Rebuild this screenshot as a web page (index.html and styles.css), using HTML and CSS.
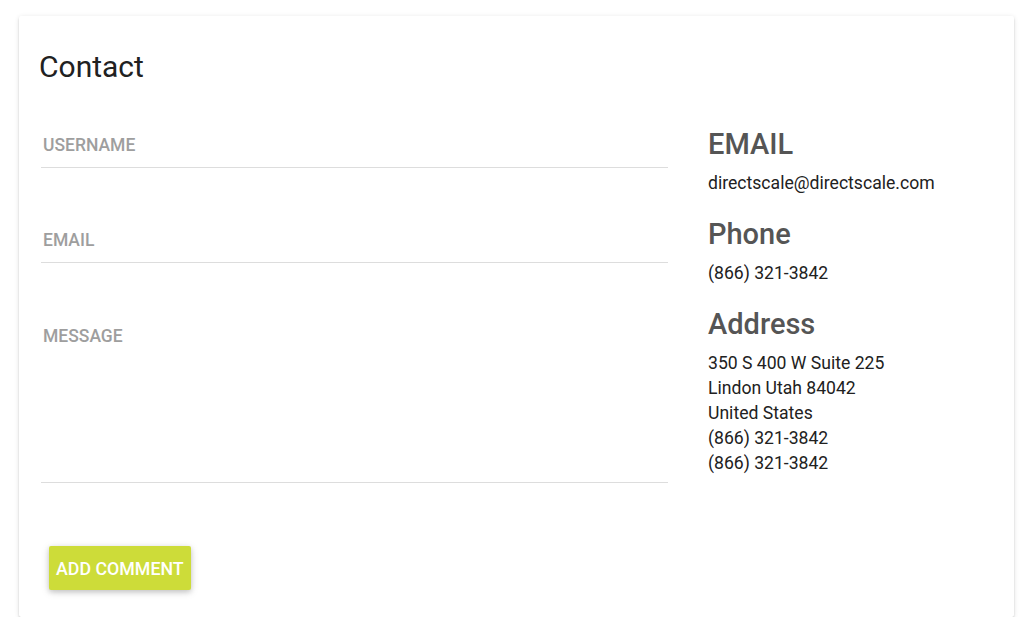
FILE: index.html
```html
<!DOCTYPE html>
<html>
<head>
  <title>Contact</title>
  <link rel="stylesheet" href="styles.css">
</head>
<body>
  <div class="card">
    <h1 class="title">Contact</h1>

    <div class="content">
      <!-- Comment form -->
      <form class="form">
        <input class="field" type="text" placeholder="USERNAME">
        <input class="field" type="email" placeholder="EMAIL">
        <textarea class="field message" placeholder="MESSAGE"></textarea>
      </form>

      <!-- Contact details -->
      <div class="info">
        <h2>EMAIL</h2>
        <p>directscale@directscale.com</p>
        <h2>Phone</h2>
        <p>(866) 321-3842</p>
        <h2>Address</h2>
        <p>350 S 400 W Suite 225<br>Lindon Utah 84042<br>United States<br>(866) 321-3842<br>(866) 321-3842</p>
      </div>
    </div>

    <button class="btn" type="button">ADD COMMENT</button>
  </div>
</body>
</html>
```

FILE: styles.css
```css
body {
  margin: 0;
  padding: 16px 21px 0 19px;
  background-color: #ffffff;
  font-family: Roboto, "Liberation Sans", sans-serif;
}
.card {
  height: 601px;
  box-sizing: border-box;
  padding: 33px 20px 0 20px;
  background-color: #ffffff;
  border-radius: 2px;
  box-shadow: 0 2px 2px 0 rgba(0, 0, 0, 0.14), 0 1px 5px 0 rgba(0, 0, 0, 0.12), 0 3px 1px -2px rgba(0, 0, 0, 0.2);
}
.title {
  margin: 0;
  font-size: 30px;
  font-weight: 400;
  line-height: 36px;
  color: #212121;
}
.content {
  display: flex;
  align-items: flex-start;
  gap: 40px;
  margin-top: 43px;
}
.form {
  display: flex;
  flex-direction: column;
  width: 627px;
  margin-left: 2px;
}
.field {
  height: 40px;
  box-sizing: border-box;
  margin: 0 0 55px 0;
  padding: 0 2px 5px 2px;
  border: none;
  border-bottom: 1px solid #dddddd;
  font-family: inherit;
  font-size: 17.5px;
  font-weight: 500;
  outline: none;
  resize: none;
}
.field::placeholder {
  color: #9e9e9e;
}
.message {
  height: 165px;
  padding-top: 8px;
  margin-bottom: 0;
}
.info h2 {
  margin: 0;
  font-size: 29px;
  font-weight: 500;
  line-height: 32px;
  color: #555555;
}
.info p {
  margin: 11px 0 22px 0;
  font-size: 17.6px;
  line-height: 25px;
  color: #212121;
}
.info p:last-child {
  margin-bottom: 0;
}
.btn {
  margin: 63px 0 0 10px;
  height: 44px;
  padding: 0 7px;
  border: none;
  border-radius: 2px;
  background-color: #cddc39;
  color: #ffffff;
  font-family: inherit;
  font-size: 17.8px;
  font-weight: 500;
  box-shadow: 0 2px 5px 0 rgba(0, 0, 0, 0.16), 0 2px 10px 0 rgba(0, 0, 0, 0.12);
}
```
